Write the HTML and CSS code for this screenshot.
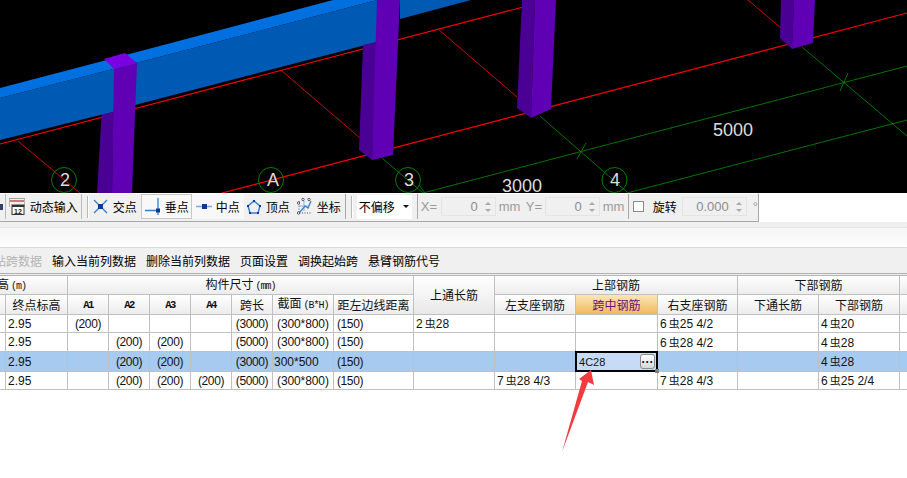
FILE: index.html
```html
<!DOCTYPE html>
<html lang="zh-CN">
<head>
<meta charset="utf-8">
<title>梁平法表格</title>
<link rel="stylesheet" href="styles.css">
</head>
<body>
<div class="page">
  <svg class="scene" width="907" height="193" viewBox="0 0 907 193">
    <g class="red-thick">
      <line x1="0" y1="144" x2="550" y2="0"/>
      <line x1="222" y1="193" x2="907" y2="13"/>
    </g>
    <g class="red-thin">
      <line x1="18" y1="141" x2="80" y2="193"/>
      <line x1="282" y1="71" x2="360" y2="138"/>
      <line x1="438" y1="29" x2="517" y2="97"/>
      <line x1="748" y1="0" x2="781" y2="28"/>
    </g>
    <g class="green">
      <line x1="382" y1="158" x2="423" y2="193"/>
      <line x1="540" y1="116" x2="627" y2="192"/>
      <line x1="802" y1="47" x2="907" y2="136"/>
      <line x1="423" y1="193" x2="907" y2="66"/>
      <line x1="627" y1="193" x2="907" y2="120"/>
      <line x1="586" y1="143" x2="577" y2="159"/>
      <line x1="848" y1="73" x2="840" y2="91"/>
      <line x1="419" y1="185" x2="425" y2="193"/>
      <circle class="ring" cx="64" cy="180" r="12.5"/>
      <circle class="ring" cx="271" cy="180" r="12.5"/>
      <circle class="ring" cx="408" cy="180" r="12.5"/>
      <circle class="ring" cx="614.5" cy="180" r="12.5"/>
    </g>
    <polygon class="col-left" points="103,90 114,90 112,193 97,193"/>
    <polygon class="beam-top" points="0,88 103,61 333,0 377,0 113,69 0,98"/>
    <polygon class="beam-front" points="0,98 113,69 377,0 377,42 135,105 112,112 0,140"/>
    <polygon class="beam-front" points="400,0 471,0 400,19"/>
    <polygon class="col-front" points="114,69 137,63 132,193 112,193"/>
    <polygon class="col-top" points="104,59 125,53 137,63 114,69"/>
    <polygon class="col-left" points="363,45 377,42 372,160 359,150"/>
    <polygon class="col-front" points="377,0 400,0 393,155 372,160"/>
    <polygon class="col-left" points="522,0 535,0 531,118 517,108"/>
    <polygon class="col-front" points="535,0 556,0 551,109 531,118"/>
    <polygon class="col-left" points="781,0 794,0 792,49 780,38"/>
    <polygon class="col-front" points="794,0 815,0 813,43 792,49"/>
    <g class="scene-text">
      <text x="65" y="186">2</text>
      <text x="273" y="186">A</text>
      <text x="409" y="186">3</text>
      <text x="615" y="186">4</text>
      <text x="733" y="136">5000</text>
      <text x="522" y="192">3000</text>
    </g>
  </svg>

  <div class="toolbar-row">
    <div class="toolbar">
      <div class="edge"><span class="edge-mark"></span></div>
      <div class="tool tool-dyn">
        <svg width="16" height="17" viewBox="0 0 16 17">
          <rect x="0" y="0" width="16" height="1" fill="#a8a0a0"/>
          <rect x="0" y="2" width="16" height="2" fill="#d07878"/>
          <rect x="0" y="1" width="1" height="8" fill="#b8b0b0"/>
          <rect x="15" y="1" width="1" height="8" fill="#b8b0b0"/>
          <rect x="3" y="7" width="12" height="9.5" fill="#fff" stroke="#333"/>
          <rect x="3" y="7" width="12" height="2" fill="#333"/>
          <text x="9" y="15.5" class="cal-text">12</text>
        </svg>
        <span>动态输入</span>
      </div>
      <div class="grip"></div>
      <div class="tool tool-cross">
        <svg width="15" height="15" viewBox="0 0 15 15">
          <path d="M1 1L14 14M14 1L1 14" class="ic-blue"/>
          <rect x="5" y="5" width="5" height="5" class="ic-dark"/>
        </svg>
        <span>交点</span>
      </div>
      <div class="tool tool-perp">
        <svg width="15" height="17" viewBox="0 0 15 17">
          <path d="M0 12.5H15M13 0V17" class="ic-blue"/>
          <rect x="11" y="10.5" width="4" height="4" class="ic-dark"/>
        </svg>
        <span>垂点</span>
      </div>
      <div class="tool tool-mid">
        <svg width="16" height="7" viewBox="0 0 16 7">
          <path d="M0 3.5H16" class="ic-light"/>
          <rect x="6" y="1" width="5" height="5" class="ic-dark"/>
        </svg>
        <span>中点</span>
      </div>
      <div class="tool tool-top">
        <svg width="14" height="14" viewBox="0 0 14 14">
          <path d="M7 1L13 6L11 13H3L1 6Z" class="ic-pent"/>
          <rect x="6" y="0" width="2" height="2" class="ic-dark"/>
          <rect x="0" y="5" width="2" height="2" class="ic-dark"/>
          <rect x="12" y="5" width="2" height="2" class="ic-dark"/>
          <rect x="2" y="12" width="2" height="2" class="ic-dark"/>
          <rect x="10" y="12" width="2" height="2" class="ic-dark"/>
        </svg>
        <span>顶点</span>
      </div>
      <div class="tool tool-coord">
        <svg width="16" height="17" viewBox="0 0 16 17">
          <path d="M2 3V15H15" class="ic-dots"/>
          <path d="M2 8H12M7 3V13" class="ic-thin"/>
          <path d="M3 14L8 8L11 10L14 3" class="ic-blue"/>
          <circle cx="6" cy="1.5" r="1.2" class="ic-ring"/>
          <circle cx="12" cy="1.5" r="1.2" class="ic-ring"/>
          <circle cx="1.5" cy="5" r="1.2" class="ic-ring"/>
          <circle cx="1.5" cy="15" r="1.2" class="ic-ring"/>
        </svg>
        <span>坐标</span>
      </div>
      <div class="divider"></div>
      <div class="grip grip-b"></div>
      <div class="select"><span>不偏移</span><i class="caret"></i></div>
      <div class="divider div-b"></div>
      <span class="dim lbl-x">X=</span>
      <div class="field"><span>0</span><span class="spin"><i class="up"></i><i class="down"></i></span></div>
      <span class="dim lbl-mm">mm</span>
      <span class="dim lbl-y">Y=</span>
      <div class="field"><span>0</span><span class="spin"><i class="up"></i><i class="down"></i></span></div>
      <span class="dim lbl-mm">mm</span>
      <div class="divider div-c"></div>
      <span class="check"></span>
      <span class="rotate">旋转</span>
      <div class="field field-wide"><span>0.000</span><span class="spin"><i class="up"></i><i class="down"></i></span></div>
      <span class="dim deg">°</span>
    </div>
  </div>

  <div class="strip"><div class="strip-inner"></div></div>

  <div class="actions">
    <span class="action-off">粘贴跨数据</span>
    <span>输入当前列数据</span>
    <span>删除当前列数据</span>
    <span>页面设置</span>
    <span>调换起始跨</span>
    <span>悬臂钢筋代号</span>
  </div>

  <div class="table-wrap">
    <table class="grid">
      <colgroup>
        <col class="w62"><col class="w62"><col class="w41"><col class="w41"><col class="w41"><col class="w41"><col class="w41"><col class="w61"><col class="w80"><col class="w81"><col class="w81"><col class="w82"><col class="w80"><col class="w81"><col class="w81"><col class="w60">
      </colgroup>
      <thead>
        <tr class="h1">
          <th colspan="2">标高<span class="latin">(m)</span></th>
          <th colspan="7">构件尺寸<span class="latin">(mm)</span></th>
          <th rowspan="2" class="tall">上通长筋</th>
          <th colspan="3">上部钢筋</th>
          <th colspan="2">下部钢筋</th>
          <th></th>
        </tr>
        <tr class="h2">
          <th>起点标高</th>
          <th>终点标高</th>
          <th class="mono">A1</th>
          <th class="mono">A2</th>
          <th class="mono">A3</th>
          <th class="mono">A4</th>
          <th>跨长</th>
          <th>截面<span class="latin">(B*H)</span></th>
          <th>距左边线距离</th>
          <th>左支座钢筋</th>
          <th class="active-head">跨中钢筋</th>
          <th>右支座钢筋</th>
          <th>下通长筋</th>
          <th>下部钢筋</th>
          <th></th>
        </tr>
      </thead>
      <tbody>
        <tr class="r18">
          <td>2.95</td><td>2.95</td><td class="c">(200)</td><td></td><td></td><td></td><td class="c">(3000)</td><td class="sec">(300*800)</td><td class="dist">(150)</td>
          <td>2<span class="rb">虫</span>28</td><td></td><td></td><td>6<span class="rb">虫</span>25 4/2</td><td></td><td>4<span class="rb">虫</span>20</td><td></td>
        </tr>
        <tr class="r19">
          <td>2.95</td><td>2.95</td><td></td><td class="c">(200)</td><td class="c">(200)</td><td></td><td class="c">(5000)</td><td class="sec">(300*800)</td><td class="dist">(150)</td>
          <td></td><td></td><td></td><td>6<span class="rb">虫</span>28 4/2</td><td></td><td>4<span class="rb">虫</span>28</td><td></td>
        </tr>
        <tr class="r20 selected">
          <td>2.95</td><td>2.95</td><td></td><td class="c">(200)</td><td class="c">(200)</td><td></td><td class="c">(3000)</td><td class="tight">300*500</td><td class="dist">(150)</td>
          <td></td><td></td>
          <td class="editing"><div class="edit-box"><span>4C28</span><span class="more">···</span><i class="handle"></i></div></td>
          <td></td><td></td><td>4<span class="rb">虫</span>28</td><td></td>
        </tr>
        <tr class="r18">
          <td>2.95</td><td>2.95</td><td></td><td class="c">(200)</td><td class="c">(200)</td><td class="c">(200)</td><td class="c">(5000)</td><td class="sec">(300*800)</td><td class="dist">(150)</td>
          <td></td><td>7<span class="rb">虫</span>28 4/3</td><td></td><td>7<span class="rb">虫</span>28 4/3</td><td></td><td>6<span class="rb">虫</span>25 2/4</td><td></td>
        </tr>
      </tbody>
    </table>
  </div>

  <svg class="arrow" width="40" height="90" viewBox="0 0 40 90">
    <polygon points="31,0 34,15 28,12 2,82 22,11 19,9"/>
  </svg>
</div>
</body>
</html>
```
FILE: styles.css
```css
* { box-sizing: border-box; }
html, body { margin: 0; padding: 0; background: #fff; }
.page {
  position: relative;
  width: 907px;
  height: 478px;
  overflow: hidden;
  display: flex;
  flex-direction: column;
  font-family: "Noto Sans CJK SC", "Liberation Sans", sans-serif;
  font-size: 12px;
  color: #000;
}

/* 3D scene */
.scene { display: block; flex: none; background: #000; }
.red-thick line { stroke: #f00; stroke-width: 1.2; }
.red-thin line { stroke: #f00; stroke-width: .8; }
.green line { stroke: #008000; stroke-width: .9; }
.ring { fill: none; stroke: #008000; stroke-width: 1; }
.beam-top { fill: #0070e0; }
.beam-front { fill: #005ab4; }
.col-front { fill: #5f00b4; }
.col-left { fill: #4a0094; }
.col-top { fill: #7a00e2; }
.scene-text text {
  font-family: "Liberation Sans", sans-serif;
  font-size: 18px;
  fill: #ddd;
  text-anchor: middle;
}

/* main toolbar */
.toolbar-row { flex: none; height: 29px; background: #fff; }
.toolbar {
  width: 759px;
  height: 29px;
  padding-bottom: 2px;
  display: flex;
  align-items: center;
  background: #f0f0f0;
  border-top: 1px solid #fff;
  border-right: 1px solid #a8a8a8;
  border-bottom: 1px solid #a8a8a8;
  white-space: nowrap;
}
.edge { width: 6px; height: 100%; display: flex; align-items: center; border-right: 1px solid #bbb; }
.edge-mark { width: 3px; height: 6px; background: #33406a; }
.tool { height: 100%; display: flex; align-items: center; flex: none; }
.tool svg { flex: none; }
.tool-dyn { width: 76px; padding-left: 3px; gap: 5px; border-right: 1px solid #bbb; }
.grip { width: 2px; height: 22px; margin: 0 3px 0 5px; border-left: 1px solid #b8b8b8; border-right: 1px solid #fff; flex: none; }
.tool-cross { width: 49px; padding-left: 1px; gap: 5px; }
.tool-perp { width: 51px; padding-left: 3px; gap: 5px; background: #f8f8f8; border: 1px solid #c8c8c8; }
.tool-mid { width: 52px; padding-left: 4px; gap: 4px; background: #f8f8f8; }
.tool-top { width: 50px; padding-left: 3px; gap: 5px; }
.tool-coord { width: 51px; padding-left: 3px; gap: 4px; }
.ic-blue { fill: none; stroke: #2f7ed8; stroke-width: 1.3; }
.ic-light { fill: none; stroke: #7fa8dc; stroke-width: 1.5; }
.ic-dark { fill: #0b3a96; }
.ic-pent { fill: none; stroke: #3a7fd5; stroke-width: 1.5; }
.ic-dots { fill: none; stroke: #446; stroke-width: 1; stroke-dasharray: 1 1.5; }
.ic-thin { fill: none; stroke: #8ab4e4; stroke-width: 1; }
.ic-ring { fill: #fff; stroke: #334; stroke-width: .8; }
.cal-text { font-family: "Liberation Sans", sans-serif; font-size: 7px; font-weight: bold; text-anchor: middle; fill: #222; }

.divider { width: 1px; height: 100%; background: #a8a8a8; flex: none; }
.grip-b { margin: 0 4px 0 5px; height: 22px; }
.select {
  width: 55px;
  height: 24px;
  display: flex;
  align-items: center;
  justify-content: space-between;
  padding: 0 3px 0 2px;
  background: #fff;
  flex: none;
}
.caret { width: 0; height: 0; border: 3px solid transparent; border-top: 3px solid #111; border-bottom: 0; }
.div-b { margin-left: 5px; }
.dim { font-family: "Liberation Sans", sans-serif; font-size: 13px; color: #9a9a9a; flex: none; }
.lbl-x { margin-left: 3px; width: 20px; }
.lbl-y { margin-left: 5px; width: 19px; }
.lbl-mm { margin-left: 3px; width: 22px; }
.field {
  width: 55px;
  height: 19px;
  display: flex;
  align-items: center;
  justify-content: flex-end;
  gap: 5px;
  padding-right: 2px;
  border: 1px solid #e4e4e4;
  font-family: "Liberation Sans", sans-serif;
  font-size: 13px;
  color: #8c8c8c;
  flex: none;
}
.field-wide { width: 65px; margin-left: 5px; }
.spin { width: 10px; display: flex; flex-direction: column; align-items: center; gap: 4px; }
.up { width: 0; height: 0; border: 3px solid transparent; border-bottom: 3px solid #aaa; border-top: 0; }
.down { width: 0; height: 0; border: 3px solid transparent; border-top: 3px solid #aaa; border-bottom: 0; }
.div-c { margin-left: 3px; }
.check { width: 11px; height: 11px; margin-left: 4px; border: 1px solid #8a8a8a; background: #fff; flex: none; }
.rotate { margin-left: 9px; flex: none; }
.deg { margin-left: 6px; }

/* blank strip */
.strip { flex: none; height: 26px; overflow: hidden; background: #f0f0f0; border-bottom: 1px solid #dcdcdc; }
.strip-inner { height: 100%; margin-top: 5px; border-top: 1px solid #e4e4e4; background: linear-gradient(#f6f6f6, #fff); }

/* action toolbar */
.actions {
  flex: none;
  height: 26px;
  display: flex;
  align-items: center;
  gap: 10px;
  margin-left: -18px;
  width: 925px;
  background: #f0f0f0;
  border-bottom: 1px solid #b0b0b0;
  white-space: nowrap;
}
.action-off { color: #b4b4b4; }

/* table */
.table-wrap { flex: none; padding-top: 1px; background: #f0f0f0; }
.grid {
  margin-left: -56px;
  border-collapse: separate;
  border-spacing: 0;
  table-layout: fixed;
  width: 964px;
  background: #fff;
  border-top: 1px solid #b4b4b4;
}
.w41 { width: 41px; }
.w60 { width: 60px; }
.w61 { width: 61px; }
.w62 { width: 62px; }
.w80 { width: 80px; }
.w81 { width: 81px; }
.w82 { width: 82px; }
.h1 { height: 19px; }
.h2 { height: 20px; }
.r18 { height: 18px; }
.r19 { height: 19px; }
.r20 { height: 20px; }
.grid th, .grid td {
  padding: 0;
  border-right: 1px solid #c0c0c0;
  border-bottom: 1px solid #c0c0c0;
  overflow: hidden;
  white-space: nowrap;
}
.grid th {
  font-weight: 400;
  font-size: 12px;
  line-height: 14px;
  text-align: center;
  background: linear-gradient(#fff, #ececec);
  color: #111;
}
.grid th.tall { background: linear-gradient(#fff, #e8e8e8); }
.grid th .latin {
  font-family: "Liberation Mono", monospace;
  font-size: 10px;
  letter-spacing: -1px;
  margin-left: 2px;
}
.grid th.mono {
  font-family: "Liberation Mono", monospace;
  font-size: 10.5px;
  font-weight: 700;
  letter-spacing: -1.5px;
}
.grid th.active-head { background: linear-gradient(#fbe6b4, #f2b95e); color: #6a0a8c; }
.grid td {
  font-family: "Liberation Sans", "Noto Sans CJK SC", sans-serif;
  font-size: 12px;
  line-height: 14px;
  padding-left: 2px;
  color: #111;
}
.grid td.c { padding-left: 0; text-align: center; letter-spacing: -.4px; }
.grid td.sec { padding-left: 4px; letter-spacing: -.1px; }
.grid td.dist { padding-left: 3px; letter-spacing: -.4px; }
.grid td.tight { padding-left: 1px; }
.rb { font-family: "Noto Sans CJK SC", sans-serif; font-size: 11px; margin: 0 0 0 2px; }
.selected td { background: #a6caf0; }
.grid td.editing { padding: 0; position: relative; overflow: visible; background: #a6caf0; }
.edit-box {
  position: absolute;
  left: -1px;
  top: -1px;
  width: 83px;
  height: 21px;
  display: flex;
  align-items: center;
  justify-content: space-between;
  padding: 0 1px 0 2px;
  border: 2px solid #000;
  background: #c6dcf6;
  font-size: 11px;
}
.more {
  width: 15px;
  height: 15px;
  display: flex;
  align-items: center;
  justify-content: center;
  border: 1px solid #8c8c8c;
  border-radius: 3px;
  background: linear-gradient(#fff, #d8d8d8);
  font-weight: 700;
  font-size: 12px;
  color: #111;
}
.handle { position: absolute; right: -3px; bottom: -3px; width: 4px; height: 4px; background: #808080; }

/* annotation arrow */
.arrow { position: absolute; left: 560px; top: 370px; }
.arrow polygon { fill: #f23a3f; }
```
